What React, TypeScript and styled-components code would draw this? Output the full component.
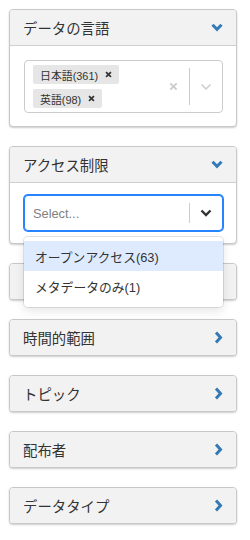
import styled, { createGlobalStyle } from "styled-components";

const GlobalStyle = createGlobalStyle`
  body {
    margin: 0;
    font-family: "Liberation Sans", "Noto Sans CJK JP", sans-serif;
    color: #333;
    background: #fff;
  }
  * { box-sizing: border-box; }
`;

const Page = styled.div`
  width: 250px;
  padding: 9px 13px 0 9px;
`;

const Panel = styled.div<{ $raised?: boolean }>`
  position: relative;
  z-index: ${p => (p.$raised ? 2 : "auto")};
  border: 1px solid #c8c8c8;
  border-radius: 4px;
  background: #fff;
  margin-bottom: 19px;
  box-shadow: 0 1px 2px rgba(0, 0, 0, 0.2);
`;

const Heading = styled.div<{ $open?: boolean }>`
  height: ${p => (p.$open ? 36 : 35)}px;
  display: flex;
  align-items: center;
  justify-content: space-between;
  padding: 0 13px;
  background: #f2f2f2;
  border-bottom: ${p => (p.$open ? "1px solid #cfcfcf" : "none")};
  border-radius: ${p => (p.$open ? "3px 3px 0 0" : "3px")};
  font-size: 14.4px;
  color: #333;
`;

const Body = styled.div<{ $top: number; $bottom: number }>`
  position: relative;
  padding: ${p => p.$top}px 13px ${p => p.$bottom}px 14px;
`;

const Control = styled.div<{ $focused?: boolean }>`
  display: flex;
  align-items: stretch;
  min-height: 36px;
  border: 1px solid ${p => (p.$focused ? "#2684ff" : "#ccc")};
  box-shadow: ${p => (p.$focused ? "0 0 0 1px #2684ff" : "none")};
  border-radius: 4px;
  background: #fff;
`;

const Values = styled.div`
  flex: 1;
  display: flex;
  flex-direction: column;
  align-items: flex-start;
  gap: 5px;
  padding: 4px 6px 4px 8px;
  min-width: 0;
`;

const Tag = styled.div`
  display: flex;
  align-items: center;
  height: 19px;
  padding: 0 7px;
  gap: 7px;
  white-space: nowrap;
  background: #e6e6e6;
  border-radius: 2px;
  font-size: 10.9px;
  color: #333;
`;

const Placeholder = styled.div`
  flex: 1;
  display: flex;
  align-items: center;
  padding-left: 8px;
  font-size: 12.8px;
  color: #808080;
`;

const Indicators = styled.div`
  display: flex;
  align-items: center;
`;

const IndicatorBox = styled.div`
  display: flex;
  align-items: center;
  justify-content: center;
  width: 32px;
  align-self: stretch;
`;

const Separator = styled.span`
  width: 1px;
  align-self: stretch;
  margin: 7px 0;
  background: #ccc;
`;

const Menu = styled.div`
  position: absolute;
  left: 14px;
  right: 13px;
  top: calc(100% - 6px);
  z-index: 5;
  background: #fff;
  border-radius: 4px;
  padding: 4px 0 6px;
  box-shadow: 0 0 0 1px rgba(0, 0, 0, 0.1), 0 4px 11px rgba(0, 0, 0, 0.1);
`;

const Option = styled.div<{ $active?: boolean }>`
  height: 30px;
  display: flex;
  align-items: center;
  padding: 0 11px;
  font-size: 12.8px;
  color: #333;
  background: ${p => (p.$active ? "#deebff" : "transparent")};
`;

const ChevronDown = () => (
  <svg width="12" height="9" viewBox="0 0 12 9">
    <path d="M1.5 1.8 L6 6.3 L10.5 1.8" fill="none" stroke="#337ab7" strokeWidth="3" />
  </svg>
);

const ChevronRight = () => (
  <svg width="9" height="13" viewBox="0 0 9 13">
    <path d="M2 1.5 L6.5 6.5 L2 11.5" fill="none" stroke="#337ab7" strokeWidth="3" />
  </svg>
);

const SmallX = ({ color, size, width }: { color: string; size: number; width: number }) => (
  <svg width={size} height={size} viewBox="0 0 10 10">
    <path d="M1.5 1.5 L8.5 8.5 M8.5 1.5 L1.5 8.5" stroke={color} strokeWidth={width} />
  </svg>
);

const Caret = ({ color, width }: { color: string; width: number }) => (
  <svg width="12" height="8" viewBox="0 0 12 8">
    <path d="M1.5 1.5 L6 6 L10.5 1.5" fill="none" stroke={color} strokeWidth={width} />
  </svg>
);

const collapsed = ["時間的範囲", "トピック", "配布者", "データタイプ"];

export default function App() {
  return (
    <Page>
      <GlobalStyle />
      <Panel>
        <Heading $open>
          データの言語
          <ChevronDown />
        </Heading>
        <Body $top={14} $bottom={13}>
          <Control>
            <Values>
              <Tag>
                日本語(361)
                <SmallX color="#333" size={7} width={2.4} />
              </Tag>
              <Tag>
                英語(98)
                <SmallX color="#333" size={7} width={2.4} />
              </Tag>
            </Values>
            <Indicators>
              <IndicatorBox>
                <SmallX color="#ccc" size={9} width={2} />
              </IndicatorBox>
              <Separator />
              <IndicatorBox>
                <Caret color="#ccc" width={1.5} />
              </IndicatorBox>
            </Indicators>
          </Control>
        </Body>
      </Panel>

      <Panel $raised>
        <Heading $open>
          アクセス制限
          <ChevronDown />
        </Heading>
        <Body $top={12} $bottom={12}>
          <Control $focused>
            <Placeholder>Select...</Placeholder>
            <Indicators>
              <Separator />
              <IndicatorBox>
                <Caret color="#333" width={2.4} />
              </IndicatorBox>
            </Indicators>
          </Control>
          <Menu>
            <Option $active>オープンアクセス(63)</Option>
            <Option>メタデータのみ(1)</Option>
          </Menu>
        </Body>
      </Panel>

      <Panel>
        <Heading>
          <span />
          <ChevronRight />
        </Heading>
      </Panel>

      {collapsed.map(title => (
        <Panel key={title}>
          <Heading>
            {title}
            <ChevronRight />
          </Heading>
        </Panel>
      ))}
    </Page>
  );
}
